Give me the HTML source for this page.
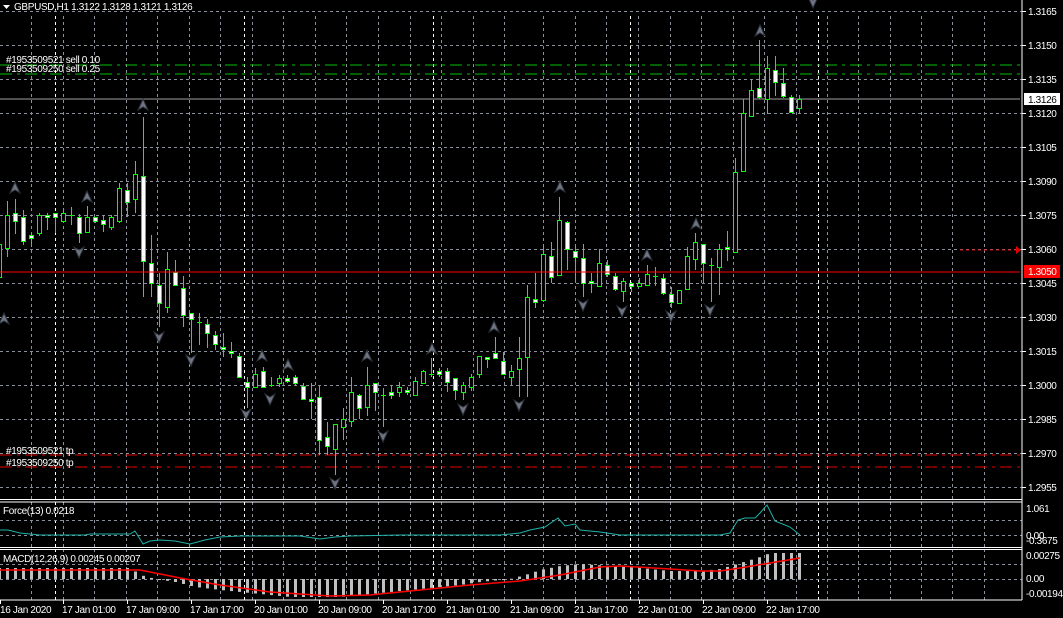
<!DOCTYPE html>
<html><head><meta charset="utf-8"><style>
html,body{margin:0;padding:0;background:#000;width:1063px;height:618px;overflow:hidden}
svg{display:block}
text{font-family:"Liberation Sans",sans-serif;font-size:10px;fill:#fff;letter-spacing:-0.35px}
</style></head><body>
<svg id="s" width="1063" height="618" xmlns="http://www.w3.org/2000/svg">
<g id="grid"></g>
<g id="lines">
<line x1="0" y1="65" x2="1020" y2="65" stroke="#00c000" stroke-dasharray="12,5,3,5"/>
<line x1="0" y1="74" x2="1020" y2="74" stroke="#00c000" stroke-dasharray="12,5,3,5"/>
<line x1="0" y1="99" x2="1020" y2="99" stroke="#a0a0a0"/>
<line x1="0" y1="455" x2="1020" y2="455" stroke="#e00000" stroke-dasharray="12,5,3,5"/>
<line x1="0" y1="467" x2="1020" y2="467" stroke="#e00000" stroke-dasharray="12,5,3,5"/>
<line x1="960" y1="250" x2="1016" y2="250" stroke="#e00000" stroke-dasharray="3,3"/>
<polygon points="1016,246 1021,250 1016,254" fill="#e00000"/>
</g>
<g id="arrows"></g>
<g id="candles"></g>
<line x1="0" y1="272" x2="1020" y2="272" stroke="#ff0000"/>
<g id="ind"></g>
<line x1="0" y1="499.5" x2="1022" y2="499.5" stroke="#fff"/>
<line x1="0" y1="502" x2="1022" y2="502" stroke="#fff"/>
<line x1="0" y1="547.5" x2="1022" y2="547.5" stroke="#fff"/>
<line x1="0" y1="549.5" x2="1022" y2="549.5" stroke="#fff"/>
<line x1="0" y1="600" x2="1022" y2="600" stroke="#fff"/>
<line x1="1022" y1="0" x2="1022" y2="600" stroke="#fff"/>
<polygon points="3,5 10,5 6.5,9" fill="#fff"/>
<text x="14" y="10">GBPUSD,H1  1.3122 1.3128 1.3121 1.3126</text>
<text x="6" y="63">#1953509521 sell 0.10</text>
<text x="6" y="72">#1953509250 sell 0.25</text>
<text x="6" y="454">#1953509521 tp</text>
<text x="6" y="466">#1953509250 tp</text>
<text x="3" y="514">Force(13) 0.0218</text>
<text x="3" y="562">MACD(12,26,9) 0.00245 0.00207</text>
<g id="axis"></g>
<rect x="1024" y="93" width="36" height="12" fill="#fff"/>
<text x="1028" y="103" style="fill:#000">1.3126</text>
<rect x="1024" y="265" width="36" height="13" fill="#ff0000"/>
<text x="1028" y="275">1.3050</text>
<text x="1026" y="512">1.061</text>
<text x="1026" y="539">0.00</text>
<text x="1026" y="544">-0.3675</text>
<text x="1026" y="559">0.00275</text>
<text x="1026" y="582">0.00</text>
<text x="1026" y="597">-0.00194</text>
</svg>
<script>
var NS="http://www.w3.org/2000/svg";
function el(p,t,a){var e=document.createElementNS(NS,t);for(var k in a)e.setAttribute(k,a[k]);document.getElementById(p).appendChild(e);return e;}
var gx=[31,63,94,126,157,189,220,252,283,315,346,378,410,441,473,504,543,575,606,638,670,701,733,764,796,827,858,890,921,952,984];
var wx=[55,244,433,630,818];
var panels=[[16,499],[502,547],[549,600]];
panels.forEach(function(p){
 gx.forEach(function(x){el("grid","line",{x1:x+.5,y1:p[0],x2:x+.5,y2:p[1],stroke:"#8a909a","stroke-dasharray":"3,3"});});
 wx.forEach(function(x){el("grid","line",{x1:x+.5,y1:p[0],x2:x+.5,y2:p[1],stroke:"#fff","stroke-dasharray":"3,3"});});
});
for(var i=0;i<15;i++){var y=11+34*i;el("grid","line",{x1:0,y1:y+.5,x2:1022,y2:y+.5,stroke:"#8a909a","stroke-dasharray":"3,3"});
 var p=(1.3165-0.0015*i).toFixed(4);el("axis","line",{x1:1022,y1:y+.5,x2:1026,y2:y+.5,stroke:"#fff"});
 var t=el("axis","text",{x:1028,y:y+4});t.textContent=p;}
el("grid","line",{x1:0,y1:535.5,x2:1022,y2:535.5,stroke:"#8a909a","stroke-dasharray":"3,3"});
el("grid","line",{x1:0,y1:579.5,x2:1022,y2:579.5,stroke:"#8a909a","stroke-dasharray":"3,3"});
el("grid","line",{x1:0,y1:520.5,x2:1022,y2:520.5,stroke:"#8a909a","stroke-dasharray":"3,3"});
el("grid","line",{x1:0,y1:564.5,x2:1022,y2:564.5,stroke:"#8a909a","stroke-dasharray":"3,3"});
var tl=[[0,"16 Jan 2020"],[63,"17 Jan 01:00"],[127,"17 Jan 09:00"],[191,"17 Jan 17:00"],[255,"20 Jan 01:00"],[319,"20 Jan 09:00"],[383,"20 Jan 17:00"],[447,"21 Jan 01:00"],[511,"21 Jan 09:00"],[575,"21 Jan 17:00"],[639,"22 Jan 01:00"],[703,"22 Jan 09:00"],[767,"22 Jan 17:00"]];
tl.forEach(function(a){el("axis","line",{x1:a[0]+.5,y1:600,x2:a[0]+.5,y2:604,stroke:"#fff"});var t=el("axis","text",{x:a[0]==0?0:a[0]-1,y:613});t.textContent=a[1];});
var C=[[-1,240,280,244,277,1],
[7,201,257,215,248,1],[15,199,234,213,221,0],[23,210,245,217,241,0],[31,233,247,235,238,0],[39,213,236,215,233,1],[47,213,230,215,217,0],[55,213,233,213,217,0],[63,208,222,213,221,1],[71,207,225,215,216,2],[79,214,243,217,233,0],[87,206,233,217,232,1],[95,217,223,217,221,0],[103,215,232,220,224,0],[111,215,230,217,227,1],[119,183,223,188,221,1],[127,183,217,190,202,0],[135,161,213,174,199,1],[143,117,297,176,261,0],[151,235,297,263,283,0],[159,273,327,285,303,0],[167,252,313,269,307,1],[175,260,285,272,285,0],[183,276,327,288,315,0],[191,313,353,313,319,0],[199,313,345,322,322,2],[207,319,348,324,333,0],[215,331,350,335,344,0],[223,333,357,347,349,0],[231,342,358,351,353,0],[239,353,378,356,377,0],[247,377,408,382,387,0],[255,368,387,374,387,1],[263,367,387,371,387,0],
[271,377,387,385,385,2],[279,375,387,378,383,1],[287,375,383,378,381,0],[295,375,385,377,383,0],[303,383,400,386,399,0],[311,383,419,399,401,0],[319,386,455,397,440,0],[327,422,455,437,446,0],[335,424,475,424,449,1],[343,408,440,419,427,1],[351,377,427,392,421,1],[359,394,419,395,408,0],[367,367,416,385,407,1],[375,383,411,383,392,0],[383,388,427,395,395,2],[391,385,399,392,395,0],[399,382,397,387,392,1],[407,387,395,390,392,0],[415,377,395,381,395,1],[423,370,383,371,383,1],[431,358,377,374,374,2],[439,368,377,371,374,0],[447,368,392,371,382,0],[455,378,400,378,390,0],[463,382,400,385,392,1],[471,374,391,377,387,1],[479,356,378,356,374,1],[487,357,368,357,358,0],[495,337,358,353,358,0],[503,352,374,361,374,0],[511,365,385,371,377,1],[519,337,397,358,369,1],
[527,285,397,297,357,1],[535,273,308,299,302,0],[543,244,302,254,300,1],[551,242,283,256,277,0],[559,197,275,220,275,1],[567,221,270,222,249,0],[575,244,282,251,257,0],[583,244,297,258,283,0],[591,273,293,281,283,0],[599,249,286,263,286,1],[607,260,277,265,274,0],[615,273,291,276,289,0],[623,278,302,281,291,1],[631,282,292,283,286,0],[639,278,286,283,286,1],[647,265,286,274,285,1],[655,267,286,276,276,2],[663,274,295,278,293,0],[671,287,308,294,302,0],[679,290,303,290,303,1],[687,247,289,256,289,1],
[695,233,270,242,259,1],[703,244,283,244,263,0],[711,258,302,265,265,2],[719,244,295,249,267,1],[727,231,261,247,249,0],[735,158,252,172,252,1],[743,99,172,113,171,1],[751,79,117,90,116,1],[759,40,99,88,97,0],[767,56,114,68,99,1],[775,56,96,70,82,0],[783,68,98,83,96,0],[791,95,113,97,112,0],[799,95,113,99,108,1]];
C.forEach(function(c){var x=c[0]+.5;
 el("candles","line",{x1:x,y1:c[1],x2:x,y2:c[2],stroke:"#00ff00"});
 if(c[5]==2){el("candles","line",{x1:x-2.5,y1:c[3]+.5,x2:x+2.5,y2:c[3]+.5,stroke:"#00ff00"});}
 else{var h=Math.max(2,c[4]-c[3]);el("candles","rect",{x:c[0]-1.5,y:c[3]+.5,width:4,height:h,fill:c[5]?"#000":"#fff",stroke:"#00ff00"});}
});
function up(x,y){el("arrows","path",{d:"M"+x+","+(y-7)+" L"+(x+5)+","+(y+4)+" L"+x+","+(y+1)+" L"+(x-5)+","+(y+4)+"Z",fill:"#6e7480",stroke:"#2a2f3a","stroke-width":1});}
function dn(x,y){el("arrows","path",{d:"M"+x+","+(y+7)+" L"+(x+5)+","+(y-4)+" L"+x+","+(y-1)+" L"+(x-5)+","+(y-4)+"Z",fill:"#6e7480",stroke:"#2a2f3a","stroke-width":1});}
[[15,189],[87,198],[143,106],[262,357],[288,366],[367,357],[432,350],[494,328],[560,188],[647,256],[696,225],[760,32],[4,320]].forEach(function(a){up(a[0],a[1]);});
[[79,251],[159,336],[191,359],[246,413],[270,398],[335,482],[383,435],[463,408],[519,404],[583,304],[622,310],[671,315],[710,309],[813,1]].forEach(function(a){dn(a[0],a[1]);});
var F=[[0,530],[8,530],[20,533],[40,535],[85,535],[90,534],[130,534],[135,531],[143,544],[150,541],[160,540],[175,541],[190,544],[205,540],[220,537],[240,536],[300,536],[320,539],[335,537],[350,536],[400,535],[500,535],[520,533],[530,530],[545,527],[558,518],[565,526],[575,524],[580,530],[600,532],[620,535],[670,535],[720,535],[730,533],[738,520],[745,518],[755,518],[760,513],[767,505],[775,521],[790,527],[800,535]];
el("ind","polyline",{points:F.map(function(p){return p.join(",");}).join(" "),fill:"none",stroke:"#20b2aa"});
function interp(A,x){for(var i=1;i<A.length;i++){if(x<=A[i][0]){var a=A[i-1],b=A[i];return a[1]+(b[1]-a[1])*(x-a[0])/(b[0]-a[0]);}}return A[A.length-1][1];}
var H=[[0,568],[130,568],[140,575],[155,579],[175,582],[195,587],[220,590],[260,594],[290,597],[340,597],[370,594],[400,591],[430,588],[460,585],[480,582],[500,580],[510,579],[525,575],[540,570],[560,566],[580,564],[610,566],[640,568],[670,571],[700,571],[720,569],[740,563],[760,557],[770,553],[800,553]];
for(var x=-1;x<=799;x+=8){var y=interp(H,x);var t=Math.min(y,579),b=Math.max(y,579);el("ind","rect",{x:x-1,y:t,width:3,height:Math.max(1,b-t),fill:"#c0c0c0"});}
var R=[[0,570],[140,570],[150,572],[180,578],[220,585],[270,592],[330,596],[370,595],[420,590],[470,585],[520,581],[560,575],[600,567],[620,566],[670,569],[700,571],[720,571],[740,568],[770,563],[800,558]];
el("ind","polyline",{points:R.map(function(p){return p.join(",");}).join(" "),fill:"none",stroke:"#ff0000","stroke-width":1.5});
</script>
</body></html>
